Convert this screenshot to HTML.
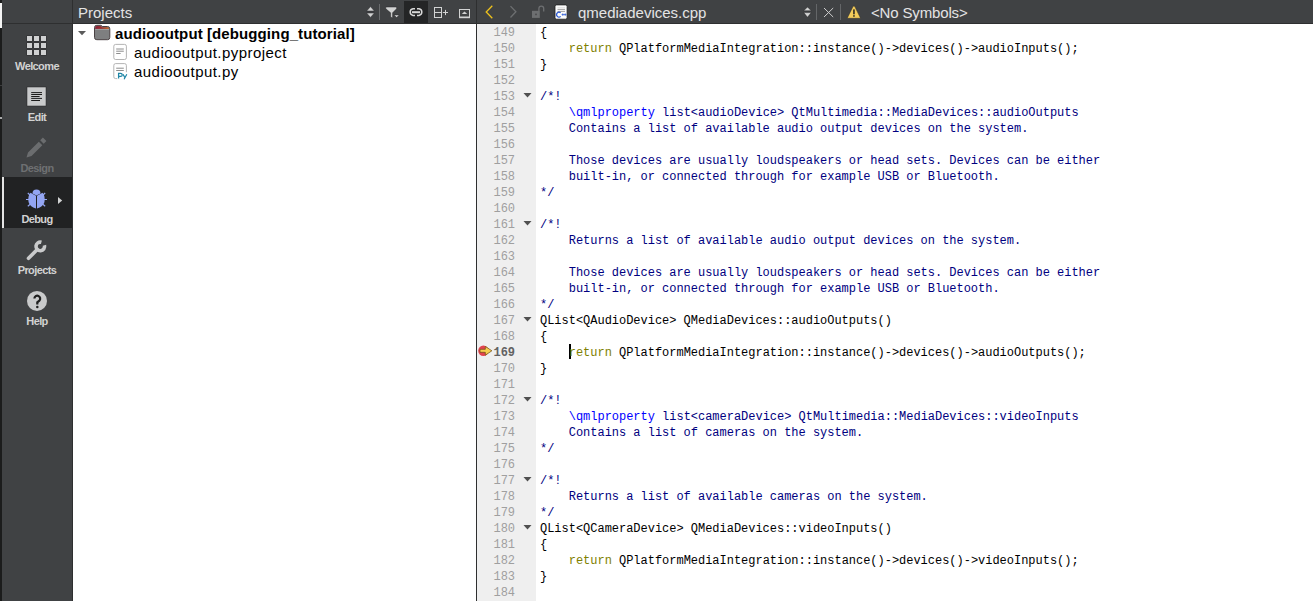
<!DOCTYPE html>
<html><head><meta charset="utf-8">
<style>
*{margin:0;padding:0;box-sizing:border-box}
html,body{width:1313px;height:601px;overflow:hidden;background:#fff;font-family:"Liberation Sans",sans-serif}
.a{position:absolute}
#strip{left:0;top:0;width:2px;height:601px;background:#1b1c1c}
#stripw{left:0;top:3px;width:2px;height:25px;background:#f4f4f4}
#side{left:2px;top:0;width:70px;height:601px;background:#404244}
#sideb{left:72px;top:0;width:1px;height:601px;background:#2e2f30}
#hdr{left:73px;top:0;width:1240px;height:23px;background:#404244}
#hline{left:2px;top:23px;width:1311px;height:1px;background:#2e2f30}
#div{left:476px;top:0;width:1px;height:601px;background:#2e2f30}
#gutter{left:477px;top:24px;width:59px;height:577px;background:#efefef}
.htxt{color:#e4e4e4;font-size:15px;line-height:23px;top:1px;white-space:nowrap}
.mode{left:2px;width:70px;height:51px}
.mlabel{position:absolute;left:0;width:70px;text-align:center;font-size:11px;line-height:13px;font-weight:bold;color:#d2d2d2;white-space:nowrap;letter-spacing:-0.6px}
.tree{color:#000;font-size:15px;line-height:19px;white-space:nowrap}
.code{font-family:"Liberation Mono",monospace;font-size:12px;line-height:16px;white-space:pre;letter-spacing:-0.02px}
.ln{left:477px;width:38px;text-align:right;color:#9f9f9f}
#code{left:540px;top:25px;color:#000}
.kw{color:#808000}
.cm{color:#000080}
.tg{color:#0000ff}
</style></head><body>
<div class="a" id="strip"></div>
<div class="a" id="stripw"></div>
<div class="a" style="left:0;top:85px;width:2px;height:1px;background:#3c3d3e"></div>
<div class="a" style="left:0;top:117px;width:2px;height:2px;background:#a9aaab"></div>
<div class="a" id="side"></div>
<div class="a" id="sideb"></div>
<div class="a" id="hdr"></div>
<div class="a" id="hline"></div>
<div class="a" id="div"></div>
<div class="a" id="gutter"></div>


<svg class="a" style="left:0;top:0" width="1313" height="601" viewBox="0 0 1313 601">
<!-- projects header icons -->
<path d="M366.6 11 L370.5 6.6 L374.4 11 Z M366.6 13 L370.5 17.4 L374.4 13 Z" fill="#d2d3d3" stroke="#262728" stroke-width="0.5"/>
<rect x="379" y="4" width="1" height="16" fill="#6a6c6e"/>
<path d="M385.8 7 H396.6 V8.8 L392.6 12.8 V18 L390.6 17 V12.8 L385.8 8.8 Z" fill="#d2d3d3" stroke="#262728" stroke-width="0.5"/>
<path d="M394 15 H399.2 L396.6 17.6 Z" fill="#d2d3d3" stroke="#262728" stroke-width="0.4"/>
<rect x="404" y="1" width="24" height="22" fill="#242526"/>
<g fill="none" stroke="#d8d8d8" stroke-width="1.5">
<path d="M415 8.7 H413 A3.4 3.4 0 0 0 413 15.4 H415"/>
<path d="M417 8.7 H419 A3.4 3.4 0 0 1 419 15.4 H417"/>
</g>
<rect x="412" y="11.2" width="8" height="2" fill="#d8d8d8"/>
<g fill="none" stroke="#d2d3d3" stroke-width="1">
<rect x="434.5" y="7.5" width="7" height="10"/>
<path d="M434.5 12.5 H441.5 M442.8 12.5 H448 M445.5 9.9 V15.1"/>
<rect x="459.5" y="9.5" width="10" height="8"/>
</g>
<rect x="459" y="16.5" width="11" height="1.7" fill="#d2d3d3"/>
<path d="M461.8 14 L464.5 11.6 L467.2 14 Z" fill="#d2d3d3"/>
<!-- editor toolbar icons -->
<path d="M492.3 5.8 L486.2 12 L492.3 18.2" fill="none" stroke="#eec21c" stroke-width="1.3"/>
<path d="M510.5 6.1 L515.9 11.8 L510.5 17.5" fill="none" stroke="#6d6f71" stroke-width="1.3"/>
<rect x="532" y="10.8" width="7.8" height="7.1" fill="#6d6f71"/>
<rect x="535.4" y="13.6" width="1.2" height="1.6" fill="#3a3b3c"/>
<path d="M538.9 11.2 V8.6 A2.4 2.4 0 0 1 543.7 8.6 V11.6" fill="none" stroke="#6d6f71" stroke-width="1.3"/>
<rect x="555" y="4.9" width="12.1" height="14.3" rx="1.6" fill="#fbfbfb" stroke="#1e1f20" stroke-width="0.8"/>
<path d="M557.5 7.6 H565" stroke="#d8d8d8" stroke-width="0.7"/>
<path d="M557.5 9.4 H565 M557.5 11.4 H565" stroke="#8a8a8a" stroke-width="0.8"/>
<path d="M560.6 12.9 A2.3 2.5 0 1 0 560.6 16.3" fill="none" stroke="#2d5bd6" stroke-width="1.2"/>
<path d="M561.6 14.6 H564 M562.8 13.4 V15.8 M564 14.6 H566.4 M565.2 13.4 V15.8" fill="none" stroke="#2d5bd6" stroke-width="0.8"/>
<path d="M803.7 10.8 L807.5 6.9 L811.3 10.8 Z M803.7 12.6 L807.5 17.3 L811.3 12.6 Z" fill="#d2d3d3" stroke="#262728" stroke-width="0.5"/>
<rect x="816" y="4" width="1" height="16" fill="#646668"/>
<rect x="840" y="4" width="1" height="16" fill="#646668"/>
<path d="M824 8 L833.2 17 M833.2 8 L824 17" stroke="#cfcfcf" stroke-width="1"/>
<path d="M853 6.6 Q853.9 5.2 854.8 6.6 L860.2 17.4 Q860.5 18.3 859.5 18.3 H848.3 Q847.3 18.3 847.6 17.4 Z" fill="#f2cb5a" stroke="#2d2d2a" stroke-width="0.5"/>
<rect x="853.2" y="9.4" width="1.5" height="4.9" fill="#1e1e1e"/>
<rect x="853.2" y="15.2" width="1.5" height="1.5" fill="#1e1e1e"/>
<!-- sidebar icons -->
<g fill="#2a2b2c"><rect x="26.5" y="35.5" width="6" height="6"/><rect x="33.5" y="35.5" width="6" height="6"/><rect x="40.5" y="35.5" width="6" height="6"/><rect x="26.5" y="42.5" width="6" height="6"/><rect x="33.5" y="42.5" width="6" height="6"/><rect x="40.5" y="42.5" width="6" height="6"/><rect x="26.5" y="49.5" width="6" height="6"/><rect x="33.5" y="49.5" width="6" height="6"/><rect x="40.5" y="49.5" width="6" height="6"/></g><g fill="#cfd0d1"><rect x="27" y="36" width="5" height="5"/><rect x="34" y="36" width="5" height="5"/><rect x="41" y="36" width="5" height="5"/><rect x="27" y="43" width="5" height="5"/><rect x="34" y="43" width="5" height="5"/><rect x="41" y="43" width="5" height="5"/><rect x="27" y="50" width="5" height="5"/><rect x="34" y="50" width="5" height="5"/><rect x="41" y="50" width="5" height="5"/></g>
<rect x="27" y="87" width="19" height="19" fill="#c9cacb" stroke="#202122" stroke-width="0.5"/>
<path d="M31.2 92.6 H42 M31.2 94.5 H42 M31.2 96.5 H39.6 M31.2 98.4 H42 M31.2 100.5 H40" stroke="#1c1c1c" stroke-width="1"/>
<path d="M26.5 157.6 L28 152.6 L38.8 141.8 L42.3 145.3 L31.5 156.1 Z M40.2 140.3 L42.9 137.6 L46.4 141.1 L43.7 143.8 Z" fill="#6b6d6f"/>
<rect x="2" y="177" width="70" height="51" fill="#212223"/>
<rect x="2" y="177" width="2" height="51" fill="#e4e4e4"/>
<g stroke="#93a5f2" stroke-width="1.15">
<path d="M30.5 195.5 L27.8 193 M42.5 195.5 L45.2 193 M29 199.5 L26 199.5 M44 199.5 L47 199.5 M30.5 204 L27.8 206.2 M42.5 204 L45.2 206.2"/>
</g>
<path d="M36 195.7 L30.5 192.7 C28.5 194.5 28.1 198.3 28.4 201 C28.9 204.8 32.3 207.8 36 208.4 Z M37 195.7 L42.5 192.7 C44.5 194.5 44.9 198.3 44.6 201 C44.1 204.8 40.7 207.8 37 208.4 Z" fill="#93a5f2"/>
<path d="M32.5 193.4 A4 3.9 0 0 1 40.5 193.4 L36.5 195.4 Z" fill="#93a5f2"/>
<path d="M58 197 L62.2 200.5 L58 204 Z" fill="#d2d3d3"/>
<path d="M28.5 258.3 L37.2 249.6" stroke="#c9cacb" stroke-width="3.6" stroke-linecap="round"/>
<path d="M41.41 242.25 A4.3 4.3 0 1 0 44.45 245.29" fill="none" stroke="#c9cacb" stroke-width="3.6"/>
<circle cx="37" cy="300.9" r="10" fill="#c9cacb"/>
<path d="M34.4 298.6 A2.9 2.9 0 1 1 39.35 300.65 L37.3 302.3 V304.6" fill="none" stroke="#1f1f1f" stroke-width="2.2"/>
<circle cx="37.3" cy="307.1" r="1.25" fill="#1f1f1f"/>
<!-- tree icons -->
<path d="M78 31 H86 L82 35.2 Z" fill="#5b5b5b"/>
<defs><linearGradient id="fg" x1="0" x2="1" y1="0" y2="0"><stop offset="0" stop-color="#8e1f3a"/><stop offset="0.5" stop-color="#9a3530"/><stop offset="1" stop-color="#c8661e"/></linearGradient></defs>
<path d="M94.5 27.6 Q94.5 25.3 96.8 25.3 H100.4 Q101.7 25.3 102.3 26.5 H107.5 Q109.8 26.5 109.8 28.8 V37.4 Q109.8 39.7 107.5 39.7 H96.8 Q94.5 39.7 94.5 37.4 Z" fill="#7e7f80" stroke="#4a4244" stroke-width="1"/>
<path d="M95.2 28.9 V27.7 Q95.2 26 96.9 26 H100.2 Q101.3 26 101.9 27.2 H107.4 Q109.1 27.2 109.1 28.8 V28.9 Z" fill="url(#fg)"/>
<path d="M95.3 29.4 H109" stroke="#a9abac" stroke-width="0.8"/>
<rect x="113.8" y="44.4" width="12.6" height="15.1" rx="1.8" fill="#fff" stroke="#ababab" stroke-width="0.9"/>
<path d="M116.2 49 H123.8 M116.2 51.2 H123.8 M116.2 53.5 H120.6" stroke="#8c8c8c" stroke-width="1"/>
<rect x="113.8" y="63.6" width="12.6" height="15" rx="1.8" fill="#fff" stroke="#ababab" stroke-width="0.9"/>
<path d="M116.2 68.2 H123.8 M116.2 70.5 H123.8" stroke="#8c8c8c" stroke-width="1"/>
<rect x="117.2" y="72.2" width="9.8" height="7" fill="#fff"/>
<path d="M118.6 78.6 V73.4 H120.6 Q122.2 73.4 122.2 74.9 Q122.2 76.4 120.6 76.4 H118.6" fill="none" stroke="#1f86a6" stroke-width="1.3"/>
<path d="M123 74.2 L124.9 77.6 M126.8 74.2 L124.1 79.2" fill="none" stroke="#1f86a6" stroke-width="1.2"/>
<!-- gutter -->
<g fill="#505050">
<path d="M523.5 92.9 H531.5 L527.5 97.5 Z"/>
<path d="M523.5 220.9 H531.5 L527.5 225.5 Z"/>
<path d="M523.5 316.9 H531.5 L527.5 321.5 Z"/>
<path d="M523.5 396.9 H531.5 L527.5 401.5 Z"/>
<path d="M523.5 476.9 H531.5 L527.5 481.5 Z"/>
<path d="M523.5 524.9 H531.5 L527.5 529.5 Z"/>
</g>
<circle cx="483.4" cy="350.8" r="5.2" fill="#e2434f"/>
<path d="M480 349.3 H485.3 V346.4 L491.9 350.8 L485.3 355.2 V352.3 H480 Z" fill="#f7cf4f" stroke="#6b4a10" stroke-width="0.7"/>
<rect x="569" y="344" width="2" height="15" fill="#000"/>
</svg>

<!-- header texts -->
<div class="a htxt" style="left:78px">Projects</div>
<div class="a htxt" style="left:578px">qmediadevices.cpp</div>
<div class="a htxt" style="left:871px;letter-spacing:-0.15px">&lt;No Symbols&gt;</div>

<!-- tree -->
<div class="a tree" style="left:115px;top:24px;font-weight:bold;letter-spacing:0.1px">audiooutput [debugging_tutorial]</div>
<div class="a tree" style="left:134px;top:43px;letter-spacing:0.45px">audiooutput.pyproject</div>
<div class="a tree" style="left:134px;top:62px;letter-spacing:0.45px">audiooutput.py</div>

<!-- modes -->
<div class="a mlabel" style="left:2px;top:60px">Welcome</div>
<div class="a mlabel" style="left:2px;top:111px">Edit</div>
<div class="a mlabel" style="left:2px;top:162px;color:#6e7072">Design</div>
<div class="a mlabel" style="left:2px;top:213px">Debug</div>
<div class="a mlabel" style="left:2px;top:264px">Projects</div>
<div class="a mlabel" style="left:2px;top:315px">Help</div>

<!-- code -->
<div class="a code ln" id="lns" style="top:25px">149
150
151
152
153
154
155
156
157
158
159
160
161
162
163
164
165
166
167
168
<b style="color:#626262">169</b>
170
171
172
173
174
175
176
177
178
179
180
181
182
183
184</div>
<div class="a code" id="code">{
    <span class="kw">return</span> QPlatformMediaIntegration::instance()-&gt;devices()-&gt;audioInputs();
}

<span class="cm">/*!
    <span class="tg">\qmlproperty</span> list&lt;audioDevice&gt; QtMultimedia::MediaDevices::audioOutputs
    Contains a list of available audio output devices on the system.

    Those devices are usually loudspeakers or head sets. Devices can be either
    built-in, or connected through for example USB or Bluetooth.
*/</span>

<span class="cm">/*!
    Returns a list of available audio output devices on the system.

    Those devices are usually loudspeakers or head sets. Devices can be either
    built-in, or connected through for example USB or Bluetooth.
*/</span>
QList&lt;QAudioDevice&gt; QMediaDevices::audioOutputs()
{
    <span class="kw">return</span> QPlatformMediaIntegration::instance()-&gt;devices()-&gt;audioOutputs();
}

<span class="cm">/*!
    <span class="tg">\qmlproperty</span> list&lt;cameraDevice&gt; QtMultimedia::MediaDevices::videoInputs
    Contains a list of cameras on the system.
*/</span>

<span class="cm">/*!
    Returns a list of available cameras on the system.
*/</span>
QList&lt;QCameraDevice&gt; QMediaDevices::videoInputs()
{
    <span class="kw">return</span> QPlatformMediaIntegration::instance()-&gt;devices()-&gt;videoInputs();
}
</div>

</body></html>
